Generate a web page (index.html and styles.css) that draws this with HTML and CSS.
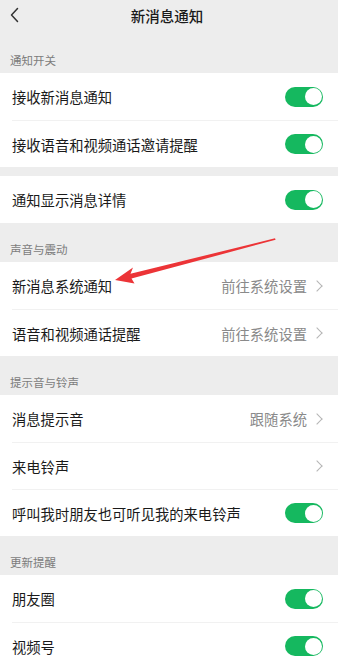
FILE: index.html
```html
<!DOCTYPE html>
<html lang="zh-CN">
<head>
    <meta charset="UTF-8">
    <meta name="viewport" content="width=device-width, initial-scale=1.0">
    <title>新消息通知</title>
    <link rel="stylesheet" href="styles.css">
</head>
<body>
    <div class="page">
        <div class="nav">
            <svg class="back" width="9" height="16" viewBox="0 0 9 16">
                <path d="M7.5 1.5 L1.5 8 L7.5 14.5" fill="none" stroke="#333" stroke-width="1.5" stroke-linecap="round" stroke-linejoin="round"/>
            </svg>
            <div class="nav-title">新消息通知</div>
        </div>

        <!-- 通知开关 -->
        <div class="group-title">通知开关</div>
        <div class="group">
            <div class="cell"><div class="cell-body">
                <span class="label">接收新消息通知</span>
                <span class="switch on"><span class="knob"></span></span>
            </div></div>
            <div class="cell"><div class="cell-body">
                <span class="label">接收语音和视频通话邀请提醒</span>
                <span class="switch on"><span class="knob"></span></span>
            </div></div>
        </div>
        <div class="group gap">
            <div class="cell"><div class="cell-body">
                <span class="label">通知显示消息详情</span>
                <span class="switch on"><span class="knob"></span></span>
            </div></div>
        </div>

        <!-- 声音与震动 -->
        <div class="group-title">声音与震动</div>
        <div class="group">
            <div class="cell"><div class="cell-body">
                <span class="label">新消息系统通知</span>
                <span class="extra">前往系统设置<i class="arrow"></i></span>
            </div></div>
            <div class="cell"><div class="cell-body">
                <span class="label">语音和视频通话提醒</span>
                <span class="extra">前往系统设置<i class="arrow"></i></span>
            </div></div>
        </div>

        <!-- 提示音与铃声 -->
        <div class="group-title">提示音与铃声</div>
        <div class="group">
            <div class="cell"><div class="cell-body">
                <span class="label">消息提示音</span>
                <span class="extra">跟随系统<i class="arrow"></i></span>
            </div></div>
            <div class="cell"><div class="cell-body">
                <span class="label">来电铃声</span>
                <span class="extra"><i class="arrow"></i></span>
            </div></div>
            <div class="cell"><div class="cell-body">
                <span class="label">呼叫我时朋友也可听见我的来电铃声</span>
                <span class="switch on"><span class="knob"></span></span>
            </div></div>
        </div>

        <!-- 更新提醒 -->
        <div class="group-title">更新提醒</div>
        <div class="group">
            <div class="cell"><div class="cell-body">
                <span class="label">朋友圈</span>
                <span class="switch on"><span class="knob"></span></span>
            </div></div>
            <div class="cell"><div class="cell-body">
                <span class="label">视频号</span>
                <span class="switch on"><span class="knob"></span></span>
            </div></div>
        </div>

        <!-- red marker arrow drawn over the screenshot -->
        <svg class="marker" width="338" height="662" viewBox="0 0 338 662">
            <polygon fill="#ec3437" points="115,280 133,267.5 130.5,273.8 275,238.3 275.6,239.8 131.5,278.6 134.5,283.5"/>
        </svg>
    </div>
</body>
</html>
```

FILE: styles.css
```css
body {
    margin: 0;
    background-color: #ededed;
    font-family: "Noto Sans CJK SC", "Noto Sans", sans-serif;
    color: #1a1a1a;
}

.page {
    position: relative;
    width: 338px;
    height: 662px;
    overflow: hidden;
}

.nav {
    height: 34px;
    display: flex;
    align-items: center;
    padding: 0 0 4px 10px;
    box-sizing: border-box;
}
.back {
    display: block;
}
.nav-title {
    flex: 1;
    text-align: center;
    font-size: 14.5px;
    font-weight: 500;
    margin-right: 23px;
}

.group-title {
    height: 39px;
    box-sizing: border-box;
    display: flex;
    align-items: flex-end;
    padding: 0 10px 6px;
    font-size: 11.5px;
    line-height: 14px;
    color: #7c7c7c;
}

.group {
    background-color: #fff;
}
.group.gap {
    margin-top: 9px;
}

.cell {
    padding-left: 12px;
}
.cell-body {
    height: 47px;
    box-sizing: border-box;
    display: flex;
    align-items: center;
    justify-content: space-between;
    padding-right: 15px;
    border-top: 1px solid #f1f1f1;
}
.cell:first-child .cell-body {
    border-top: none;
}
.label {
    font-size: 14.3px;
}

.extra {
    display: flex;
    align-items: center;
    font-size: 14.3px;
    color: #8a8a8a;
}
.arrow {
    width: 7px;
    height: 7px;
    border-top: 1.3px solid #b5b5b5;
    border-right: 1.3px solid #b5b5b5;
    transform: rotate(45deg);
    margin: 0 2px 0 6px;
}

.switch {
    width: 38px;
    height: 20px;
    border-radius: 10px;
    background-color: #15b85f;
    display: flex;
    align-items: center;
    padding: 0 1.5px;
    box-sizing: border-box;
}
.switch.on {
    justify-content: flex-end;
}
.knob {
    width: 17px;
    height: 17px;
    border-radius: 50%;
    background-color: #fff;
}

.marker {
    position: absolute;
    left: 0;
    top: 0;
    pointer-events: none;
}
```
